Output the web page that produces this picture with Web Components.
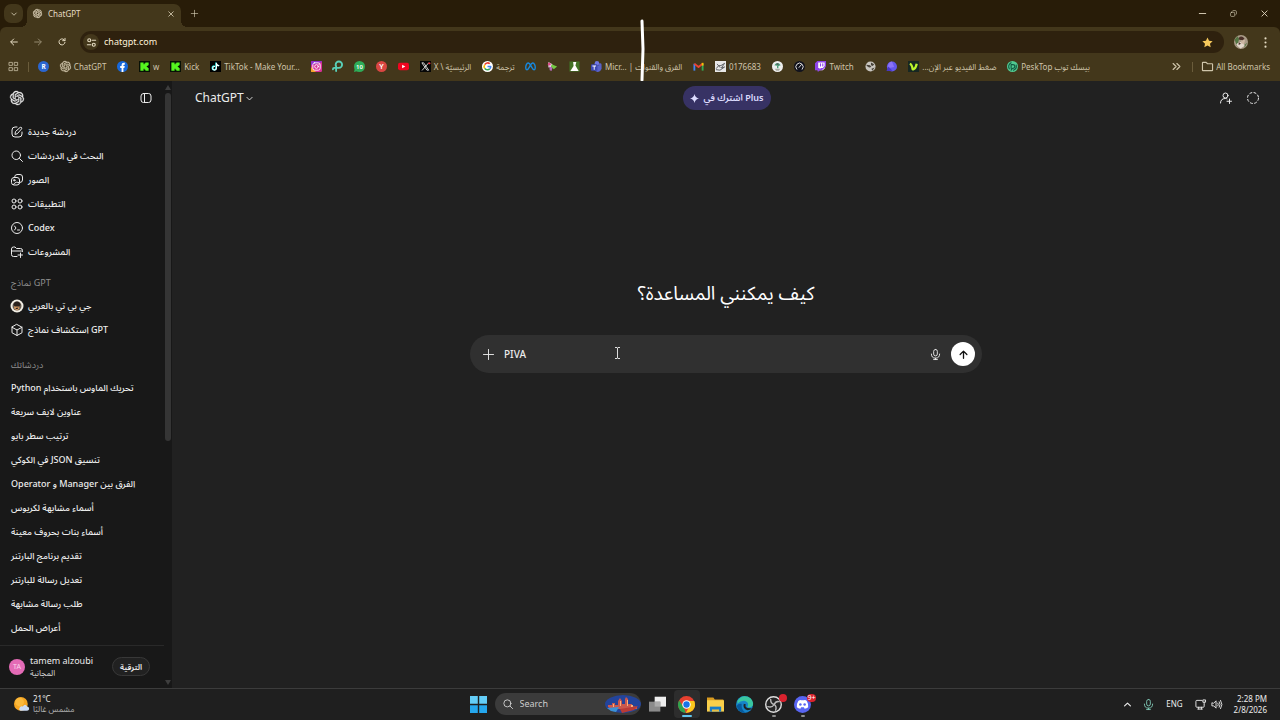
<!DOCTYPE html>
<html lang="ar">
<head>
<meta charset="utf-8">
<title>ChatGPT</title>
<style>
    :root {
        --frame: #281c08;
        --toolbar: #43371b;
        --field: #2e210e;
        --chrome-text: #e6dcc3;
        --side: #181818;
        --main: #212121;
        --text: #ececec;
    }

    body {
        margin: 0;
        height: 100vh;
        display: flex;
        flex-direction: column;
        overflow: hidden;
        background: var(--frame);
        color: var(--text);
        font-family: "Noto Sans", "Noto Sans Arabic", "DejaVu Sans", sans-serif;
        font-size: 9px;
        line-height: 12px;
    }

    .content {
        flex: 1;
        min-height: 0;
        display: flex;
    }

    .pen {
        position: absolute;
        left: 640px;
        top: 19px;
    }

    bdi { unicode-bidi: isolate; }
</style>
</head>
<body>
    <tab-strip><browser-tab>ChatGPT</browser-tab></tab-strip>
    <address-bar url="chatgpt.com"></address-bar>
    <bookmarks-bar>
        <book-mark icon="r"></book-mark>
        <book-mark icon="openai">ChatGPT</book-mark>
        <book-mark icon="facebook"></book-mark>
        <book-mark icon="kick">w</book-mark>
        <book-mark icon="kick">Kick</book-mark>
        <book-mark icon="tiktok">TikTok - Make Your...</book-mark>
        <book-mark icon="instagram"></book-mark>
        <book-mark icon="picsart"></book-mark>
        <book-mark icon="ten"></book-mark>
        <book-mark icon="yred"></book-mark>
        <book-mark icon="youtube"></book-mark>
        <book-mark icon="x">X \ الرئيسيّة</book-mark>
        <book-mark icon="google">ترجمة</book-mark>
        <book-mark icon="meta"></book-mark>
        <book-mark icon="play"></book-mark>
        <book-mark icon="flask"></book-mark>
        <book-mark icon="teams">Micr... | الفرق والقنوات</book-mark>
        <book-mark icon="gmail"></book-mark>
        <book-mark icon="sketch">0176683</book-mark>
        <book-mark icon="crest"></book-mark>
        <book-mark icon="gauge"></book-mark>
        <book-mark icon="twitch">Twitch</book-mark>
        <book-mark icon="globe"></book-mark>
        <book-mark icon="orb"></book-mark>
        <book-mark icon="veed"><bdi>ضغط الفيديو عبر الإن...</bdi></book-mark>
        <book-mark icon="pesk">PeskTop بيسك توب</book-mark>
    </bookmarks-bar>

    <div class="content">
        <side-bar>
            <side-link icon="edit">دردشة جديدة</side-link>
            <side-link icon="search">البحث في الدردشات</side-link>
            <side-link icon="images">الصور</side-link>
            <side-link icon="apps">التطبيقات</side-link>
            <side-link icon="codex">Codex</side-link>
            <side-link icon="folderplus">المشروعات</side-link>
            <side-group>
                <span slot="title">نماذج GPT</span>
                <side-link icon="arabgpt">جي بي تي بالعربي</side-link>
                <side-link icon="cube">استكشاف نماذج GPT</side-link>
            </side-group>
            <side-group class="chats">
                <span slot="title">دردشاتك</span>
                <side-link><bdi>تحريك الماوس باستخدام Python</bdi></side-link>
                <side-link><bdi>عناوين لايف سريعة</bdi></side-link>
                <side-link><bdi>ترتيب سطر بايو</bdi></side-link>
                <side-link><bdi>تنسيق JSON في الكوكي</bdi></side-link>
                <side-link><bdi>الفرق بين Manager و Operator</bdi></side-link>
                <side-link><bdi>أسماء مشابهة لكريوس</bdi></side-link>
                <side-link><bdi>أسماء بنات بحروف معينة</bdi></side-link>
                <side-link><bdi>تقديم برنامج البارتنر</bdi></side-link>
                <side-link><bdi>تعديل رسالة للبارتنر</bdi></side-link>
                <side-link><bdi>طلب رسالة مشابهة</bdi></side-link>
                <side-link><bdi>أعراض الحمل</bdi></side-link>
            </side-group>
            <user-card slot="footer" initials="TA">
                tamem alzoubi
                <span slot="plan">المجانية</span>
                <span slot="action">الترقية</span>
            </user-card>
        </side-bar>
        <chat-view>
            <bdi>كيف يمكنني المساعدة؟</bdi>
            <chat-composer slot="composer" value="PIVA"></chat-composer>
        </chat-view>
    </div>

    <task-bar></task-bar>

    <svg class="pen" width="6" height="62" viewBox="0 0 6 62" aria-hidden="true">
        <path d="M2 2L3 30L2 61" fill="none" stroke="#fff" stroke-width="3" stroke-linecap="round"/>
    </svg>

<script>
const OPENAI = `<path fill="currentColor" d="M22.2819 9.8211a5.9847 5.9847 0 0 0-.5157-4.9108 6.0462 6.0462 0 0 0-6.5098-2.9A6.0651 6.0651 0 0 0 4.9807 4.1818a5.9847 5.9847 0 0 0-3.9977 2.9 6.0462 6.0462 0 0 0 .7427 7.0966 5.98 5.98 0 0 0 .511 4.9107 6.051 6.051 0 0 0 6.5146 2.9001A5.9847 5.9847 0 0 0 13.2599 24a6.0557 6.0557 0 0 0 5.7718-4.2058 5.9894 5.9894 0 0 0 3.9977-2.9001 6.0557 6.0557 0 0 0-.7475-7.0729zm-9.022 12.6081a4.4755 4.4755 0 0 1-2.8764-1.0408l.1419-.0804 4.7783-2.7582a.7948.7948 0 0 0 .3927-.6813v-6.7369l2.02 1.1686a.071.071 0 0 1 .038.052v5.5826a4.504 4.504 0 0 1-4.4945 4.4944zm-9.6607-4.1254a4.4708 4.4708 0 0 1-.5346-3.0137l.142.0852 4.783 2.7582a.7712.7712 0 0 0 .7806 0l5.8428-3.3685v2.3324a.0804.0804 0 0 1-.0332.0615L9.74 19.9502a4.4992 4.4992 0 0 1-6.1408-1.6464zM2.3408 7.8956a4.485 4.485 0 0 1 2.3655-1.9728V11.6a.7664.7664 0 0 0 .3879.6765l5.8144 3.3543-2.0201 1.1685a.0757.0757 0 0 1-.071 0l-4.8303-2.7865A4.504 4.504 0 0 1 2.3408 7.872zm16.5963 3.8558L13.1038 8.364 15.1192 7.2a.0757.0757 0 0 1 .071 0l4.8303 2.7913a4.4944 4.4944 0 0 1-.6765 8.1042v-5.6772a.79.79 0 0 0-.407-.667zm2.0107-3.0231l-.142-.0852-4.7735-2.7818a.7759.7759 0 0 0-.7854 0L9.409 9.2297V6.8974a.0662.0662 0 0 1 .0284-.0615l4.8303-2.7866a4.4992 4.4992 0 0 1 6.6802 4.66zM8.3065 12.863l-2.02-1.1638a.0804.0804 0 0 1-.038-.0567V6.0742a4.4992 4.4992 0 0 1 7.3757-3.4537l-.142.0805L8.704 5.459a.7948.7948 0 0 0-.3927.6813zm1.0976-2.3654l2.602-1.4998 2.6069 1.4998v2.9994l-2.5974 1.4997-2.6067-1.4997Z"/>`;

/** All drawn on a 24x24 grid, stroked with the text colour unless filled. */
const ICONS = {
    openai: `<g stroke="currentColor" stroke-width=".6">${OPENAI}</g>`,
    chevron: `<path stroke-width="3" d="M3 8l9 9 9-9"/>`,
    up: `<path stroke-width="4" d="M2 17l10-10 10 10"/>`,
    close: `<path stroke-width="3" d="M3 3l18 18M21 3L3 21"/>`,
    plus: `<path d="M12 1v22M1 12h22"/>`,
    minus: `<path stroke-width="3" d="M1 12h22"/>`,
    restore: `<rect x="2" y="8" width="14" height="14" rx="3"/><path d="M8 4q1-2 3-2h7q4 0 4 4v7q0 2-2 3"/>`,
    back: `<path stroke-width="3" d="M22 12H3M11 3l-9 9 9 9"/>`,
    forward: `<path stroke-width="3" d="M2 12h19M13 3l9 9-9 9"/>`,
    reload: `<path stroke-width="3" d="M21 13a9 9 0 1 1-3-8l3 3M21 1v7h-7"/>`,
    tune: `<g stroke-width="3"><circle cx="6" cy="6" r="4"/><path d="M14 6h9M1 18h9"/><circle cx="18" cy="18" r="4"/></g>`,
    star: `<path fill="#f7c95c" stroke="none" d="M12 1l3.4 7.3 7.8.9-5.8 5.4 1.6 7.9L12 18.500l-7 4 1.600-7.900L.8 9.200l7.800-.9z"/>`,
    dots: `<g fill="currentColor" stroke="none"><circle cx="12" cy="3" r="2.300"/><circle cx="12" cy="12" r="2.300"/><circle cx="12" cy="21" r="2.300"/></g>`,
    face: `<g stroke="none"><circle cx="12" cy="12" r="12" fill="#a99b87"/><path fill="#547543" d="M1 8l5-6 3 5-4 12zM18 17l5-4-5 9z"/><path fill="#e3d8cc" d="M4 16q6-7 12-2l2 5-7 4-5-4z"/><path fill="#cdb7a3" d="M13 7l6 2-2 7-5-2z"/><path fill="#4b3129" d="M8 5q5-5 10 1l-3 3-6-1zM8 12l4 3-4 2z"/></g>`,
    grid: `<path d="M1 1h8v8H1zM15 1h8v8h-8zM1 15h8v8H1zM15 15h8v8h-8z"/>`,
    more: `<path stroke-width="3" d="M3 4l8 8-8 8M13 4l8 8-8 8"/>`,
    folder: `<path stroke-width="2.500" d="M1 4q0-1 1-1h7l3 3h10q1 0 1 1v13q0 1-1 1H2q-1 0-1-1z"/>`,
    panel: `<rect x="2" y="3" width="20" height="18" rx="5"/><path d="M9 3v18"/>`,
    edit: `<path d="M12 2H8Q2 2 2 8v8q0 6 6 6h8q6 0 6-6v-4"/><path d="M8 16l1-5 9-8q1.500-1 3 0 1 1.500 0 3l-8 9z"/>`,
    search: `<circle cx="10.500" cy="10.500" r="8.500"/><path d="M17 17l6 6"/>`,
    images: `<path d="M7 7q0-6 5-6h6q5 0 5 5v6q0 5-5 5"/><rect x="1" y="7" width="16" height="15" rx="5"/><circle cx="6.500" cy="12.500" r="1.500"/><path d="M5 21q5-8 12-3"/>`,
    apps: `<circle cx="6" cy="6" r="4"/><circle cx="18" cy="6" r="4"/><circle cx="6" cy="18" r="4"/><circle cx="18" cy="18" r="4"/>`,
    codex: `<circle cx="12" cy="12" r="11"/><path d="M7 8l3 4-3 4M13 16h4"/>`,
    folderplus: `<path d="M12 21H5q-4 0-4-4V6q0-4 4-4h3l3 3h8q4 0 4 4v2M1 10h20M19 14v9M14 18h9"/>`,
    cube: `<path d="M12 1l10 5.500v11L12 23 2 17.500v-11zM2 6.500L12 12l10-5.500M12 12v11"/>`,
    arabgpt: `<g stroke="none"><circle cx="12" cy="12" r="13" fill="#f2eee4"/><circle cx="12" cy="12" r="9" fill="#655b51"/><path fill="#d59a62" d="M7 12q5-5 9 1l1 4-5 4-6-4z"/><path fill="#2a211c" d="M5 10q1-7 7-7t7 7l-3 3H8zM9 16l6-1-2 3h-3z"/></g>`,
    mic: `<rect x="8" y="1" width="8" height="14" rx="4"/><path d="M3 11q0 9 9 9t9-9M12 20v3M8 23h8"/>`,
    arrowup: `<path stroke-width="3.500" d="M12 22V3M3 12l9-9 9 9"/>`,
    useradd: `<circle cx="11" cy="7" r="5"/><path d="M1 22q0-9 10-9 2 0 3 .7M19 14v9M14 18.500h9"/>`,
    dashed: `<circle cx="12" cy="12" r="11" stroke-linecap="butt" stroke-dasharray="5.600 3.040"/>`,
    spark: `<path fill="currentColor" stroke="none" d="M12 0q2 10 12 12-10 2-12 12-2-10-12-12Q10 10 12 0"/>`,
    r: `<g stroke="none"><circle cx="12" cy="12" r="12" fill="#2b66d0"/><text x="12" y="17" font-size="14" font-weight="700" text-anchor="middle" fill="#fff">R</text></g>`,
    facebook: `<g stroke="none"><circle cx="12" cy="12" r="12" fill="#1768db"/><path fill="#fff" d="M10 24v-9H7v-4h3V8q0-4 5-4h2v4h-2q-1 0-1 1v2h3l-1 4h-2v9z"/></g>`,
    kick: `<g stroke="none"><path fill="#071006" d="M0 0h24v24H0z"/><path fill="#55f51f" d="M3 3h7v4h2V5h2V3h7v6h-2v2h-2v2h2v2h2v6h-7v-2h-2v-2h-2v4H3z"/></g>`,
    tiktok: `<path fill="#000" stroke="none" d="M0 0h24v24H0z"/><path d="M13 4v11a4 4 0 1 1-4-4M13 5q1 5 6 5" stroke="#25f4ee" stroke-width="3"/><path d="M14 5v11a4 4 0 1 1-4-4M14 5q1 5 5 5" stroke="#fff" stroke-width="2.500"/>`,
    instagram: `<rect width="24" height="24" rx="3" fill="#d82e98" stroke="none"/><path fill="#f5a32a" stroke="none" d="M1 24q-1 0-1-1V13l11 11z"/><path fill="#8f2ed0" stroke="none" d="M2 0h20q2 0 2 2L0 9V2q0-2 2-2z"/><g stroke="#fff"><rect x="4" y="4" width="16" height="16" rx="4"/><circle cx="12" cy="12" r="4"/><path d="M17 7h1"/></g>`,
    picsart: `<g stroke="#59d0b9" stroke-width="4"><path d="M8 10V8a7 7 0 1 1 7 7H5a3 3 0 0 0-3 3"/><path d="M9 11v11"/></g>`,
    ten: `<g stroke="none"><circle cx="12" cy="12" r="12" fill="#2eac59"/><path fill="#2eac59" d="M0 24l2-8 6 6z"/><text x="12" y="17" font-size="13" font-weight="600" text-anchor="middle" fill="#fff">10</text></g>`,
    yred: `<g stroke="none"><circle cx="12" cy="12" r="12" fill="#d94642"/><text x="12" y="18" font-size="16" font-weight="600" text-anchor="middle" fill="#fff">Y</text></g>`,
    youtube: `<g stroke="none"><rect x="0" y="4" width="24" height="16" rx="4" fill="#f00420"/><path fill="#fff" d="M9 8l7 4-7 4z"/></g>`,
    x: `<path fill="#070707" stroke="none" d="M0 0h24v24H0z"/><path d="M5 4h3l11 16h-3zM19 4L5 20" stroke="#ddd"/><path stroke="#f02b37" stroke-width="4" d="M20 5h1"/>`,
    google: `<circle cx="12" cy="12" r="12" fill="#fff" stroke="none"/><g stroke-width="3.500" stroke-linecap="butt"><path d="M6 8a7 7 0 0 1 11-2" stroke="#ea4335"/><path d="M6 16a7 7 0 0 1 0-8" stroke="#fbbc05"/><path d="M17 17a7 7 0 0 1-11-1" stroke="#34a853"/><path d="M12 12h7q0 3-2 5" stroke="#4285f4"/></g>`,
    meta: `<path stroke="#1688df" stroke-width="3" d="M12 9C9 3 5 3 3 8c-2 4-2 11 1 11 4 0 5-6 8-10 3-6 7-6 9-1 2 4 2 11-1 11-4 0-5-6-8-10"/>`,
    play: `<g stroke="none"><path fill="#ecd4ec" d="M3 2l9 5-3 6-6 1z"/><path fill="#74cb43" d="M10 7l12 5-7 6-6-5z"/><path fill="#b56abb" d="M5 12l7 2-2 8-4-2z"/><circle cx="5" cy="7" r="3" fill="#e14988"/></g>`,
    flask: `<path fill="#427326" stroke="none" d="M1 1h22v22H1z"/><path fill="#fff" stroke="none" d="M9 2h7l-2 8 7 12H3l7-11z"/>`,
    teams: `<g stroke="none"><circle cx="13" cy="5" r="5" fill="#7178e4"/><circle cx="20" cy="8" r="3" fill="#5a61c5"/><path fill="#5962ca" d="M8 9h15v8q-3 7-9 7-6-1-7-7z"/><rect x="0" y="7" width="14" height="14" rx="2" fill="#3d47b3"/><path fill="#fff" d="M3 10h8v2H8v7H6v-7H3z"/></g>`,
    gmail: `<g stroke-width="4" stroke-linecap="butt"><path stroke="#4285f4" d="M3 21V6"/><path stroke="#34a853" d="M21 21V6"/><path stroke="#ea4335" d="M3 6l9 7 9-7"/><path stroke="#fbbc04" d="M21 10V4"/></g>`,
    sketch: `<path fill="#e8e8e8" stroke="none" d="M0 0h24v24H0z"/><path stroke="#55595c" d="M3 16q5-9 10-6l8-5-7 10 7-2-10 7-8-1M5 7l6 7"/>`,
    crest: `<g stroke="none"><circle cx="12" cy="12" r="12" fill="#eee"/><path fill="#449d75" d="M5 9q7-9 14 0l-5 2zM11 10h3v6h-3z"/><path fill="#5c5c62" d="M10 5h4v4h-4z"/><path fill="#a9aaa1" d="M6 17h12l-3 4H9z"/></g>`,
    gauge: `<circle cx="12" cy="12" r="12" fill="#12131d" stroke="none"/><path stroke="#eee" d="M6 18a8 8 0 1 1 12 0M11 14l5-6"/>`,
    twitch: `<path fill="#fff" stroke="none" d="M5 2h17v13l-5 5H5z"/><path fill="#8e43e9" stroke="none" fill-rule="evenodd" d="M5 0L0 5v15h6v4l5-4h4l9-8V0zM7 3h14v8l-4 4h-4l-3 3v-3H7z"/><path stroke="#8e43e9" stroke-width="2.500" d="M12 6v5M17 6v5"/>`,
    globe: `<circle cx="12" cy="12" r="11" fill="#c9c6bf" stroke="none"/><path fill="#474239" stroke="none" d="M3 8l8 1 3 4-5 1-5-3zM13 3l7 4-3 4-4-2zM14 17l7-3-5 7z"/>`,
    orb: `<circle cx="13" cy="12" r="11" fill="#6457eb" stroke="none"/><path fill="#8a72f6" stroke="none" d="M13 1q-10 2-9 15l14-3z"/><path fill="#4837ca" stroke="none" d="M1 22l4-10 9 9z"/>`,
    veed: `<path fill="#172722" stroke="none" d="M0 0h24v24H0z"/><path stroke="#baf52c" stroke-width="5" stroke-linecap="butt" d="M4 6q5 2 6 12h2q5-2 7-12"/>`,
    pesk: `<circle cx="12" cy="12" r="12" fill="#51ca91" stroke="none"/><path stroke="#105a42" stroke-width="2.500" d="M9 16V8h4a4 4 0 0 1 0 8q-2 1-4 4M5 17a9 9 0 0 1 4-13M20 9q2 8-6 11"/>`,
    weather: `<g stroke="none"><circle cx="11" cy="11" r="11" fill="#f6a623"/><circle cx="9" cy="8" r="7" fill="#fbb93c"/><path fill="#cbdcf6" d="M11 22q-4-1-2-5 2-3 5-2 4-5 7 0 4 1 3 5-1 2-4 2z"/></g>`,
    windows: `<g stroke="none"><path fill="#63cdf7" d="M0 0h11v11H0zM13 0h11v11H13z"/><path fill="#25a7ed" d="M0 13h11v11H0zM13 13h11v11H13z"/></g>`,
    tasks: `<g stroke="none"><path fill="#eee" d="M8 1h16v14H8z"/><path fill="#8b8b8b" d="M0 8h16v14H0z"/><path fill="#ababab" d="M8 8h8v7H8z"/></g>`,
    chrome: `<g stroke="none"><circle cx="12" cy="12" r="12" fill="#e7402f"/><path fill="#2da44e" d="M1.600 6L9 18l2 6Q1 23 0 13q0-4 1.600-7"/><path fill="#fcc91d" d="M23 7q3 7-2 13-4 4-10 4l6-11-5-6z"/><circle cx="12" cy="12" r="6" fill="#fff"/><circle cx="12" cy="12" r="4.500" fill="#1a73e8"/></g>`,
    explorer: `<g stroke="none"><path fill="#d99b20" d="M0 2h9l2 3h12v4H0z"/><path fill="#f9cf4a" d="M0 6h24v16H0z"/><path fill="#177cc8" d="M4 15h16v7H4z"/><path fill="#e8bd43" d="M7 19h10v3H7z"/></g>`,
    edge: `<g stroke="none"><circle cx="12" cy="12" r="12" fill="#1684c9"/><path fill="#39c6a0" d="M2 7Q7-2 17 1q8 4 7 12-2 4-8 3 3-7-3-9-6-1-11 4z"/><path fill="#075b9d" d="M8 11q-1 9 6 13Q3 24 1 14q2-4 7-3"/><path fill="#202223" d="M11 11q-2 7 5 9 4 0 7-2-2-1-7-1-4-2-2-5z"/></g>`,
    obs: `<circle cx="12" cy="12" r="11" fill="#252525" stroke="#ddd"/><path stroke="#bbb" stroke-width="2" d="M8 5q0 6 5 7 2-5 7-4M13 12q-3 5-9 3M13 12q4 3 2 8"/>`,
    discord: `<circle cx="12" cy="12" r="12" fill="#5865f2" stroke="none"/><path fill="#fff" stroke="none" d="M6 7q3-2 4-1h4q2-1 4 1 3 5 2 9-2 2-5 2l-1-2h-4l-1 2q-3 0-5-2-1-4 2-9"/><g fill="#5865f2" stroke="none"><circle cx="9" cy="12" r="1.800"/><circle cx="15" cy="12" r="1.800"/></g>`,
    network: `<path d="M15 3H4Q2 3 2 5v11q0 2 2 2h14q2 0 2-2v-4M6 22h10M8 18v4M14 18v4M18 2h5v5h-5zM20 7v4"/>`,
    volume: `<path d="M2 9v6h4l5 5V4L6 9zM15 9q2 3 0 6M18 6q4 6 0 12M21 3q6 9 0 18"/>`,
};

function define(name, html, setup) {
    const template = document.createElement("template");
    template.innerHTML = html;

    window.customElements.define(name, class extends HTMLElement {
        constructor() {
            super();
            this.attachShadow({ mode: "open" });
            this.shadowRoot.append(template.content.cloneNode(true));
        }

        connectedCallback() {
            if (setup) setup(this, this.shadowRoot);
        }
    });
}

window.customElements.define("ui-icon", class UiIcon extends HTMLElement {
    static observedAttributes = ["name"];

    constructor() {
        super();
        this.attachShadow({ mode: "open" });
    }

    attributeChangedCallback() {
        this.shadowRoot.innerHTML = `
            <style>
                :host { display: inline-block; flex: none; width: var(--size, 11px); height: var(--size, 11px); }
                svg { display: block; width: 100%; height: 100%; overflow: visible; }
            </style>
            <svg viewBox="0 0 24 24" fill="none" stroke="currentColor" stroke-width="2" stroke-linecap="round" stroke-linejoin="round" aria-hidden="true">${ICONS[this.getAttribute("name")] || ""}</svg>`;
    }
});

const RESET = `
    * { box-sizing: border-box; }
    button { margin: 0; padding: 0; border: 0; background: none; color: inherit; font: inherit; display: flex; align-items: center; justify-content: center; }
    input { margin: 0; padding: 0; border: 0; outline: 0; background: none; color: inherit; font: inherit; min-width: 0; }
    a { color: inherit; text-decoration: none; }
`;

define("browser-tab", `
    <style>${RESET}
        :host { display: flex; align-items: center; width: 154px; height: 23px; padding: 0 6px 4px; gap: 6px; box-sizing: border-box; background: var(--toolbar); border-radius: 7px 7px 0 0; font-size: 8px; position: relative; }
        :host::before, :host::after { content: ""; position: absolute; bottom: 0; width: 6px; height: 6px; }
        :host::before { right: 100%; background: radial-gradient(circle at 0 0, transparent 6px, var(--toolbar) 6px); }
        :host::after { left: 100%; background: radial-gradient(circle at 100% 0, transparent 6px, var(--toolbar) 6px); }
        span { flex: 1; }
        .x { width: 8px; height: 12px; }
        ui-icon { --size: 9px; }
        .x ui-icon { --size: 6px; }
    </style>
    <ui-icon name="openai"></ui-icon>
    <span><slot></slot></span>
    <button class="x" aria-label="Close tab"><ui-icon name="close"></ui-icon></button>
`);

define("tab-strip", `
    <style>${RESET}
        :host { display: flex; align-items: flex-end; height: 27px; flex: none; padding: 0 10px 0 4px; background: var(--frame); color: var(--chrome-text); box-sizing: border-box; }
        .tabs { width: 19px; height: 19px; margin: 0 4px 4px 0; border-radius: 7px; background: var(--toolbar); }
        .tabs ui-icon { --size: 6px; }
        .new { width: 27px; height: 27px; }
        .new ui-icon, .win ui-icon { --size: 7px; }
        .win { display: flex; gap: 20px; margin-left: auto; height: 27px; }
        .win button { width: 11px; }
    </style>
    <button class="tabs" aria-label="Search tabs"><ui-icon name="chevron"></ui-icon></button>
    <slot></slot>
    <button class="new" aria-label="New tab"><ui-icon name="plus"></ui-icon></button>
    <div class="win">
        <button aria-label="Minimize"><ui-icon name="minus"></ui-icon></button>
        <button aria-label="Restore"><ui-icon name="restore"></ui-icon></button>
        <button aria-label="Close"><ui-icon name="close"></ui-icon></button>
    </div>
`);

define("address-bar", `
    <style>${RESET}
        :host { display: flex; align-items: center; height: 30px; flex: none; padding: 0 10px 0 9px; box-sizing: border-box; border-radius: 6px 6px 0 0; background: var(--toolbar); color: var(--chrome-text); }
        nav { display: flex; gap: 14px; }
        nav button { width: 10px; }
        nav ui-icon { --size: 8px; }
        .off { opacity: 0.5; }
        label { flex: 1; display: flex; align-items: center; height: 22px; margin: 0 10px 0 13px; padding: 0 11px 0 3px; gap: 5px; border-radius: 11px; background: var(--field); }
        label i { display: flex; align-items: center; justify-content: center; width: 16px; height: 16px; border-radius: 50%; background: var(--toolbar); }
        label i ui-icon { --size: 9px; }
        input { flex: 1; font-size: 9px; color: #fff3da; }
        .me ui-icon { --size: 14px; }
        .dots { width: 10px; margin-left: 12px; }
    </style>
    <nav>
        <button aria-label="Back"><ui-icon name="back"></ui-icon></button>
        <button class="off" aria-label="Forward"><ui-icon name="forward"></ui-icon></button>
        <button aria-label="Reload"><ui-icon name="reload"></ui-icon></button>
    </nav>
    <label>
        <i><ui-icon name="tune"></ui-icon></i>
        <input type="text" aria-label="Address">
        <ui-icon name="star"></ui-icon>
    </label>
    <button class="me" aria-label="Profile"><ui-icon name="face"></ui-icon></button>
    <button class="dots" aria-label="Menu"><ui-icon name="dots"></ui-icon></button>
`, (host, root) => {
    root.querySelector("input").value = host.getAttribute("url");
});

define("book-mark", `
    <style>${RESET}
        :host { display: block; }
        a { display: flex; align-items: center; gap: 3px; white-space: nowrap; }
    </style>
    <a href="#"><ui-icon></ui-icon><slot></slot></a>
`, (host, root) => {
    root.querySelector("ui-icon").setAttribute("name", host.getAttribute("icon"));
});

define("bookmarks-bar", `
    <style>${RESET}
        :host { display: flex; align-items: center; height: 24px; flex: none; padding: 0 10px 5px 8px; box-sizing: border-box; background: var(--toolbar); color: #cfc5ab; font-size: 8px; }
        hr { width: 1px; height: 10px; margin: 0 9px; border: 0; background: #6a5c3b; }
        .list { flex: 1; display: flex; justify-content: space-between; }
        .more { margin: 0 2px 0 82px; }
        .more ui-icon, .grid ui-icon { --size: 9px; }
        .grid { width: 11px; }
        .all { display: flex; align-items: center; gap: 3px; }
    </style>
    <button class="grid" aria-label="Apps"><ui-icon name="grid"></ui-icon></button>
    <hr>
    <div class="list"><slot></slot></div>
    <button class="more" aria-label="More bookmarks"><ui-icon name="more"></ui-icon></button>
    <hr>
    <a class="all" href="#"><ui-icon name="folder"></ui-icon>All Bookmarks</a>
`);

define("side-link", `
    <style>${RESET}
        :host { display: block; }
        a { display: flex; align-items: center; gap: 5px; height: 24px; padding: 0 11px; white-space: nowrap; font-weight: 500; }
        ui-icon { --size: 12px; }
    </style>
    <a href="#"><ui-icon></ui-icon><span><slot></slot></span></a>
`, (host, root) => {
    const icon = root.querySelector("ui-icon");
    if (host.hasAttribute("icon")) icon.setAttribute("name", host.getAttribute("icon"));
    else icon.remove();
});

define("side-group", `
    <style>
        :host { display: block; padding-top: 8px; }
        :host(.chats) { padding-top: 12px; }
        h2 { margin: 0; padding: 0 11px; height: 22px; font: inherit; line-height: 22px; color: #8f8f8f; }
    </style>
    <h2><slot name="title"></slot></h2>
    <slot></slot>
`);

define("user-card", `
    <style>${RESET}
        :host { display: flex; align-items: center; gap: 5px; height: 43px; padding: 0 14px 1px 9px; box-sizing: border-box; border-top: 1px solid #292929; }
        .avatar { display: flex; align-items: center; justify-content: center; width: 16px; height: 16px; border-radius: 50%; background: #e46bb6; color: #fbd5ec; font-size: 7px; }
        .who { flex: 1; white-space: nowrap; }
        .plan { font-size: 8px; color: #d9d9d9; }
        button { height: 19px; padding: 0 7px; border: 1px solid #383838; border-radius: 10px; background: #212121; font-size: 8px; font-weight: 600; }
    </style>
    <span class="avatar"></span>
    <div class="who"><div><slot></slot></div><div class="plan"><slot name="plan"></slot></div></div>
    <button><slot name="action"></slot></button>
`, (host, root) => {
    root.querySelector(".avatar").textContent = host.getAttribute("initials");
});

define("side-bar", `
    <style>${RESET}
        :host { display: flex; flex: none; width: 172px; background: var(--side); }
        .col { flex: 1; min-width: 0; display: flex; flex-direction: column; }
        header { display: flex; align-items: center; justify-content: space-between; height: 34px; margin-bottom: 5px; padding: 0 12px 0 10px; }
        header ui-icon { --size: 14px; }
        header button ui-icon { --size: 12px; }
        nav { flex: 1; min-height: 0; overflow: hidden; }
        .scroll { width: 8px; padding: 4px 1px 3px; display: flex; flex-direction: column; align-items: center; gap: 3px; }
        .scroll b { flex: none; width: 6px; height: 348px; border-radius: 3px; background: #353535; }
        .scroll i { border: 3px solid transparent; border-top: 0; border-bottom: 5px solid #3e3e3e; }
        .scroll i:last-child { margin-top: auto; border-top: 5px solid #3e3e3e; border-bottom: 0; }
    </style>
    <div class="col">
        <header>
            <ui-icon name="openai"></ui-icon>
            <button aria-label="Close sidebar"><ui-icon name="panel"></ui-icon></button>
        </header>
        <nav><slot></slot></nav>
        <slot name="footer"></slot>
    </div>
    <div class="scroll"><i></i><b></b><i></i></div>
`);

define("chat-composer", `
    <style>${RESET}
        :host { display: flex; align-items: center; width: 100%; max-width: 512px; height: 38px; padding: 0 7px 0 13px; box-sizing: border-box; border-radius: 19px; background: #303030; position: relative; }
        input { flex: 1; margin-left: 10px; font-size: 10px; font-weight: 500; }
        .plus ui-icon { --size: 11px; }
        .send { width: 24px; height: 24px; margin-left: 10px; border-radius: 50%; background: #fff; color: #111; }
        .send ui-icon { --size: 9px; }
        .caret { position: absolute; left: 144px; top: 12px; }
    </style>
    <button class="plus" aria-label="Add"><ui-icon name="plus"></ui-icon></button>
    <input type="text" aria-label="Message">
    <button aria-label="Dictate"><ui-icon name="mic"></ui-icon></button>
    <button class="send" aria-label="Send"><ui-icon name="arrowup"></ui-icon></button>
    <svg class="caret" width="7" height="12" viewBox="0 0 7 12" fill="none" stroke="#ddd" aria-hidden="true"><path d="M1 .5h2l.5.5.5-.5h2M3.500 1v10M1 11.500h2l.5-.5.5.5h2"/></svg>
`, (host, root) => {
    root.querySelector("input").value = host.getAttribute("value");
});

define("chat-view", `
    <style>${RESET}
        :host { flex: 1; min-width: 0; display: flex; flex-direction: column; background: var(--main); }
        header { display: grid; grid-template-columns: 1fr auto 1fr; align-items: center; height: 34px; padding: 0 21px 0 23px; }
        .model { justify-self: start; gap: 2px; font-size: 12px; }
        .model ui-icon { --size: 7px; }
        .upgrade { height: 24px; padding: 0 7px; gap: 4px; border-radius: 12px; background: #373264; color: #dddcff; font-size: 9px; font-weight: 600; }
        .upgrade ui-icon { --size: 9px; }
        .tools { justify-self: end; display: flex; gap: 15px; }
        .tools ui-icon { --size: 12px; }
        main { flex: 1; display: flex; flex-direction: column; align-items: center; padding: 163px 20px 0; }
        h1 { margin: 0 0 27px; font-size: 19px; font-weight: 400; line-height: 30px; color: #fff; }
    </style>
    <header>
        <button class="model">ChatGPT <ui-icon name="chevron"></ui-icon></button>
        <button class="upgrade"><ui-icon name="spark"></ui-icon><span>اشترك في Plus</span></button>
        <div class="tools">
            <button aria-label="Add people"><ui-icon name="useradd"></ui-icon></button>
            <button aria-label="Temporary chat"><ui-icon name="dashed"></ui-icon></button>
        </div>
    </header>
    <main>
        <h1><slot></slot></h1>
        <slot name="composer"></slot>
    </main>
`);

define("task-app", `
    <style>${RESET}
        :host { display: block; position: relative; }
        button { width: 26px; height: 28px; border-radius: 4px; }
        ui-icon { --size: 17px; }
        :host([state="active"]) button { background: #2d2d2d; }
        :host([state])::after { content: ""; position: absolute; left: 11px; bottom: 1px; width: 4px; height: 2px; border-radius: 1px; background: #8d8d8d; }
        :host([state="active"])::after { left: 8px; width: 10px; background: #61c6ee; }
        ::slotted(*) { position: absolute; right: 0; top: 4px; min-width: 8px; height: 8px; border-radius: 4px; background: #d9222e; color: #fff; font-size: 7px; font-weight: 400; line-height: 8px; text-align: center; }
    </style>
    <button><ui-icon></ui-icon></button>
    <slot></slot>
`, (host, root) => {
    root.querySelector("ui-icon").setAttribute("name", host.getAttribute("icon"));
    root.querySelector("button").setAttribute("aria-label", host.getAttribute("icon"));
});

define("task-bar", `
    <style>${RESET}
        :host { display: grid; grid-template-columns: 1fr auto 1fr; align-items: center; flex: none; height: 32px; padding: 0 13px 1px 14px; box-sizing: border-box; border-top: 1px solid #3c3c3c; background: #1f1f1f; font-size: 8px; line-height: 10px; }
        .weather { display: flex; align-items: center; gap: 4px; white-space: nowrap; }
        .weather ui-icon { --size: 15px; }
        .weather small { display: block; font-size: 8px; color: #b0b0b0; }
        .apps { display: flex; align-items: center; gap: 3px; }
        .find { display: flex; align-items: center; gap: 7px; width: 146px; height: 22px; margin-right: 1px; padding: 0 0 0 8px; border-radius: 11px; background: #3b3b3b; color: #ddd; overflow: hidden; }
        .find ui-icon { --size: 10px; }
        .find input { flex: 1; width: 60px; font-size: 9px; }
        .find input::placeholder { color: #ccc; opacity: 1; }
        .tray { justify-self: end; display: flex; align-items: center; gap: 12px; }
        .tray button ui-icon { --size: 11px; }
        .tray .up ui-icon { --size: 7px; }
        .tray .mic { color: #7fc8b6; }
        .pair { display: flex; gap: 5px; }
        time { text-align: right; line-height: 11px; }
    </style>
    <div class="weather"><ui-icon name="weather"></ui-icon><div>21°C<small>مشمس غالبًا</small></div></div>
    <div class="apps">
        <task-app icon="windows"></task-app>
        <label class="find">
            <ui-icon name="search"></ui-icon>
            <input type="text" placeholder="Search" aria-label="Search">
            <svg width="36" height="20" viewBox="0 0 36 20" aria-hidden="true">
                <ellipse cx="18" cy="10" rx="18" ry="9" fill="#23449b"/>
                <path fill="#c9584d" d="M3 13v-2h4V9h3v2h3V7l2-3 2 3v3h3V5l1-2 2 2v5h4v2l5 1v2H6z"/>
                <path fill="#f6b27a" d="M8 10h1v3H8zM15 7h1v5h-1zM22 6h1v6h-1zM26 11h2v2h-2z"/>
                <path fill="#b93b36" d="M15 15l18-3-4 4-12 3z"/>
                <path fill="#3c91d5" d="M2 14l12-1-3 5-5-1z"/>
            </svg>
        </label>
        <task-app icon="tasks"></task-app>
        <task-app icon="chrome" state="active"></task-app>
        <task-app icon="explorer"></task-app>
        <task-app icon="edge"></task-app>
        <task-app icon="obs" state="open"><b></b></task-app>
        <task-app icon="discord" state="open"><b>9+</b></task-app>
    </div>
    <div class="tray">
        <button class="up" aria-label="Hidden icons"><ui-icon name="up"></ui-icon></button>
        <button class="mic" aria-label="Microphone"><ui-icon name="mic"></ui-icon></button>
        <button>ENG</button>
        <div class="pair">
            <button aria-label="Network"><ui-icon name="network"></ui-icon></button>
            <button aria-label="Volume"><ui-icon name="volume"></ui-icon></button>
        </div>
        <time>2:28 PM<br>2/8/2026</time>
    </div>
`);
</script>
</body>
</html>
